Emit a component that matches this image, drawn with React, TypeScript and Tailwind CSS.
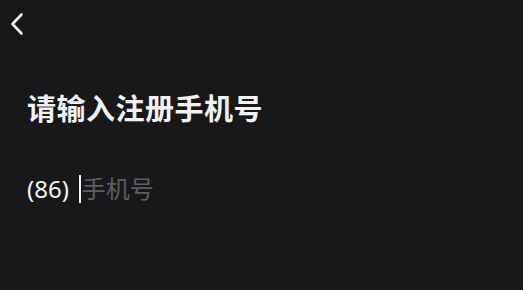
import React from "react";

const App: React.FC = () => {
  return (
    <div
      className="w-[523px] h-[290px] bg-[#18181b] text-[#f2f2f2] overflow-hidden"
      style={{ fontFamily: '"Noto Sans", "Noto Sans CJK SC", sans-serif' }}
    >
      <div className="h-[46px] pl-[9px] pt-[12px]">
        <svg width="16" height="24" viewBox="0 0 16 24" fill="none">
          <path
            d="M12.5 2.5 L3.5 12 L12.5 21.5"
            stroke="#f2f2f2"
            strokeWidth="2.6"
            strokeLinecap="round"
            strokeLinejoin="round"
          />
        </svg>
      </div>
      <div className="px-[27px] pt-[43px]">
        <h1 className="text-[29px] leading-[40px] font-bold tracking-[0.5px]">
          请输入注册手机号
        </h1>
        <div className="mt-[44px] flex items-center h-[32px] text-[24px]">
          <span>(86)</span>
          <div className="ml-[10px] flex items-center">
            <span className="w-[2px] h-[28px] bg-[#f2f2f2]" />
            <span className="text-[#5e5e60] ml-[1px]">手机号</span>
          </div>
        </div>
      </div>
    </div>
  );
};

export default App;
